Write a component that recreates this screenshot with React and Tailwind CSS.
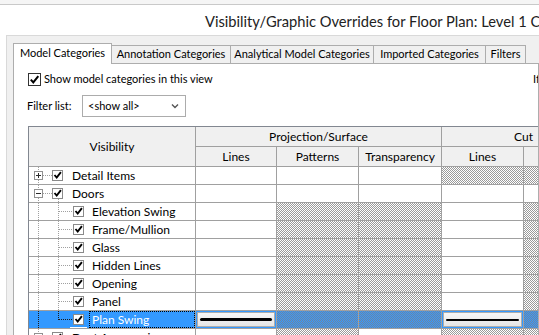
import clsx from "clsx";

const colW = ["w-[81px]", "w-[82px]", "w-[83px]", "w-[82px]", "w-[82px]"];

const fills = {
  w: "bg-white",
  h: "bg-[repeating-conic-gradient(#9a9a9a_0_25%,#ffffff_0_50%)] bg-size-[2px_2px]",
  s: "bg-[repeating-conic-gradient(#3399ff_0_25%,#72859c_0_50%)] bg-size-[2px_2px]",
};

const rows = [
  { label: "Detail Items", level: 0, toggle: "+", cells: "wwwhh" },
  { label: "Doors", level: 0, toggle: "-", expanded: true, cells: "wwwww" },
  { label: "Elevation Swing", level: 1, cells: "whhwh" },
  { label: "Frame/Mullion", level: 1, cells: "whhwh" },
  { label: "Glass", level: 1, cells: "whhwh" },
  { label: "Hidden Lines", level: 1, cells: "whhwh" },
  { label: "Opening", level: 1, cells: "whhwh" },
  { label: "Panel", level: 1, cells: "whhwh" },
  { label: "Plan Swing", level: 1, last: true, selected: true, cells: "3ss2s" },
  { label: "Duct Accessories", level: 0, toggle: "+", cells: "whwhh" },
];

const CheckMark = ({ x }) => (
  <path
    d={`M${x + 2} ${8} L${x + 4.2} ${10.6} L${x + 8.4} ${5.2}`}
    stroke="#000"
    strokeWidth="1.9"
    fill="none"
    shapeRendering="auto"
  />
);

const TreeIndent = ({ level, toggle, expanded, last, selected }) => {
  const dot = selected ? "#1a1a1a" : "#a0a0a0";
  const dash = { stroke: dot, strokeDasharray: "1 1" };

  if (level === 0) {
    return (
      <svg width="40" height="17" className="shrink-0" shapeRendering="crispEdges">
        <line x1="9.5" y1="0" x2="9.5" y2="4" {...dash} />
        <line x1="9.5" y1="13" x2="9.5" y2="17" {...dash} />
        <line x1="14" y1="8.5" x2="23" y2="8.5" {...dash} />
        <rect x="5.5" y="4.5" width="8" height="8" fill="#fff" stroke="#919191" />
        <line x1="7" y1="8.5" x2="12" y2="8.5" stroke="#2b2b2b" />
        {toggle === "+" && <line x1="9.5" y1="6" x2="9.5" y2="11" stroke="#2b2b2b" />}
        {expanded && <line x1="29.5" y1="14" x2="29.5" y2="17" {...dash} />}
        <rect x="23.5" y="3.5" width="10" height="10" fill="#fff" stroke="#8a8a8a" />
        <CheckMark x={23.5} />
      </svg>
    );
  }

  return (
    <svg width="60" height="17" className="shrink-0" shapeRendering="crispEdges">
      <line x1="9.5" y1="0" x2="9.5" y2="17" {...dash} />
      <line x1="29.5" y1="0" x2="29.5" y2={last ? 9 : 17} {...dash} />
      <line x1="30" y1="8.5" x2="44" y2="8.5" {...dash} />
      <rect x="44.5" y="3.5" width="10" height="10" fill="#fff" stroke="#8a8a8a" />
      <CheckMark x={44.5} />
      {selected && <line x1="41" y1="16.5" x2="58" y2="16.5" stroke="#fff" />}
    </svg>
  );
};

const LineButton = ({ thick }) => (
  <div className="h-full w-full p-[1px] bg-[#3399ff]">
    <div className="h-full w-full flex items-center px-[2px] border border-[#adadad] bg-gradient-to-b from-[#f6f6f6] to-[#e6e6e6]">
      <div className={clsx("w-full bg-black rounded-full", thick ? "h-[3px]" : "h-[2px]")} />
    </div>
  </div>
);

const DataRow = ({ row }) => (
  <div className={clsx("flex h-[18px] border-b border-[#a0a0a0]", row.selected && "bg-[#3399ff]")}>
    <div className="w-[167px] h-full flex border-r border-[#a0a0a0]">
      <TreeIndent {...row} />
      <span
        className={clsx(
          "flex-1 h-full flex items-center pl-[2px] border border-dotted text-[12px] leading-none whitespace-nowrap",
          row.selected ? "border-black text-white" : "border-transparent"
        )}
      >
        {row.label}
      </span>
    </div>
    {row.cells.split("").map((c, i) => (
      <div key={i} className={clsx("h-full shrink-0 border-r border-[#a0a0a0]", colW[i], fills[c] ?? "bg-[#3399ff]")}>
        {c === "3" && <LineButton thick />}
        {c === "2" && <LineButton />}
      </div>
    ))}
  </div>
);

const HeadCell = ({ className, children }) => (
  <div
    className={clsx(
      "h-[20px] shrink-0 flex items-center justify-center border-r border-b border-[#a0a0a0] bg-[#f0f0f0] text-[12px] whitespace-nowrap",
      className
    )}
  >
    {children}
  </div>
);

const tabs = [
  { label: "Annotation Categories", w: "w-[119px]" },
  { label: "Analytical Model Categories", w: "w-[143px]" },
  { label: "Imported Categories", w: "w-[112px]" },
  { label: "Filters", w: "w-[40px]" },
];

export default function App() {
  return (
    <div className="w-[539px] h-[335px] overflow-hidden bg-white font-[family-name:Lato,sans-serif] text-black">
      <div className="h-[5px] bg-[#f5f5f5] border-b border-[#c9c9c9]" />

      <div className="h-[30px] flex items-center pl-[205px] pt-[2px] text-[14.7px] text-[#222] whitespace-nowrap overflow-hidden">
        Visibility/Graphic Overrides for Floor Plan: Level 1 Copy 1
      </div>

      <div className="flex h-[300px]">
        <div className="w-[6px] shrink-0 bg-white" />
        <div className="flex-1 min-w-0 bg-[#f0f0f0] border-l border-t border-[#d9d9d9] pt-[7px] pl-[6px]">
          {/* tabs */}
          <div className="relative z-10 flex items-end -mb-[1px] text-[11px]">
            <div className="w-[99px] h-[21px] shrink-0 flex items-center justify-center bg-white border border-b-0 border-[#adadad] pb-[2px]">
              Model Categories
            </div>
            {tabs.map((t) => (
              <div
                key={t.label}
                className={clsx(
                  "h-[19px] shrink-0 flex items-center justify-center bg-[#f0f0f0] border border-l-0 border-[#adadad] whitespace-nowrap",
                  t.w
                )}
              >
                {t.label}
              </div>
            ))}
          </div>

          {/* tab body */}
          <div className="h-[300px] bg-white border border-[#adadad] pt-[9px] pl-[14px] text-[11px] overflow-hidden">
            <div className="flex items-center h-[13px] whitespace-nowrap">
              <div className="w-[505px] shrink-0 flex items-center">
                <span className="w-[13px] h-[13px] shrink-0 flex items-center justify-center border border-[#333] bg-white">
                  <svg width="11" height="11" viewBox="0 0 11 11">
                    <path d="M1.8 5.6 L4.3 8.4 L9.3 2.2" stroke="#000" strokeWidth="2" fill="none" />
                  </svg>
                </span>
                <span className="ml-[3px]">Show model categories in this view</span>
              </div>
              <span className="shrink-0">If a category is unchecked, it will not be visible.</span>
            </div>

            <div className="flex items-center mt-[9px] -ml-[1px]">
              <span className="w-[55px] shrink-0">Filter list:</span>
              <div className="w-[104px] h-[22px] shrink-0 flex items-center justify-between pl-[5px] pr-[6px] border border-[#acacac] bg-white">
                <span>&lt;show all&gt;</span>
                <svg width="8" height="6" viewBox="0 0 8 6">
                  <path d="M1 1.5 L4 4.5 L7 1.5" stroke="#555" strokeWidth="1.4" fill="none" />
                </svg>
              </div>
            </div>

            {/* grid */}
            <div className="mt-[9px] w-max border-l border-t border-[#828790]">
              <div className="flex">
                <div className="w-[167px] h-[40px] shrink-0 flex items-center justify-center border-r border-b border-[#a0a0a0] bg-[#f0f0f0] text-[12px]">
                  Visibility
                </div>
                <div className="flex flex-col">
                  <div className="flex">
                    <HeadCell className="w-[246px]">Projection/Surface</HeadCell>
                    <HeadCell className="w-[164px]">Cut</HeadCell>
                  </div>
                  <div className="flex">
                    <HeadCell className="w-[81px]">Lines</HeadCell>
                    <HeadCell className="w-[82px]">Patterns</HeadCell>
                    <HeadCell className="w-[83px]">Transparency</HeadCell>
                    <HeadCell className="w-[82px]">Lines</HeadCell>
                    <HeadCell className="w-[82px]">Patterns</HeadCell>
                  </div>
                </div>
              </div>
              {rows.map((r) => (
                <DataRow key={r.label} row={r} />
              ))}
            </div>
          </div>
        </div>
      </div>
    </div>
  );
}
